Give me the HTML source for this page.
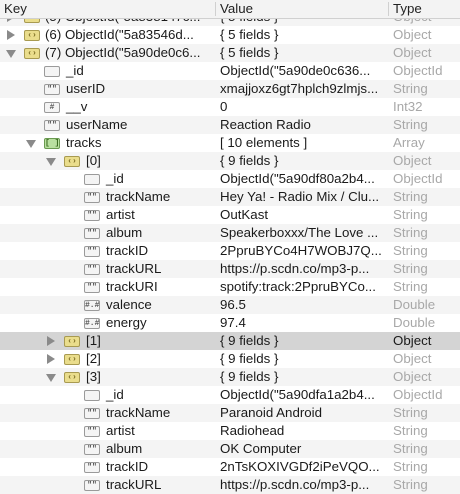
<!DOCTYPE html><html><head><style>
body{margin:0;width:460px;height:494px;overflow:hidden;background:#fff;font-family:"Liberation Sans",Arial,sans-serif;font-size:13.3px;color:#1a1a1a;position:relative}
#rows{position:absolute;top:8px;left:0;width:460px}
.r{height:18px;position:relative;line-height:18px;white-space:nowrap}
.r:nth-child(odd){background:#f4f4f4}
.r.sel{background:#d4d4d4}
.k,.v,.t{position:absolute;top:0}
.v{left:220px}
.t{left:393px;color:#a8a8a8}
.sel .t{color:#1a1a1a}
.ar{position:absolute;top:6px;width:0;height:0}
.ar.d{border-left:5px solid transparent;border-right:5px solid transparent;border-top:8px solid #8a8a8a}
.ar.rt{border-top:5px solid transparent;border-bottom:5px solid transparent;border-left:8px solid #8a8a8a;top:4px}
.ic{position:absolute;top:4px;width:14px;height:9px;border:1px solid #9a9a9a;border-radius:2px;background:#f4f4f4;font-size:8px;line-height:9px;text-align:center;color:#555;font-family:"Liberation Mono",monospace;font-weight:bold}
.ic.o{background:#eadd8c;border-color:#a89a50;color:#7a6a20}
.ic.a{background:#b9e0a0;border-color:#6a9a50;color:#3a6a20}
#hd{position:absolute;top:0;left:0;width:460px;height:18px;background:#f3f3f3;border-bottom:1px solid #d0d0d0;line-height:18px;font-size:13.3px;color:#222}
#hd span{position:absolute;top:0}
.dv{position:absolute;top:2px;width:1px;height:14px;background:#d0d0d0}
</style></head><body>
<div id="rows">
<div class="r"><span class="ar rt" style="left:7px"></span><span class="ic o" style="left:24px">‹›</span><span class="k" style="left:45px">(5) ObjectId("5a838147c...</span><span class="v">{ 5 fields }</span><span class="t">Object</span></div>
<div class="r"><span class="ar rt" style="left:7px"></span><span class="ic o" style="left:24px">‹›</span><span class="k" style="left:45px">(6) ObjectId("5a83546d...</span><span class="v">{ 5 fields }</span><span class="t">Object</span></div>
<div class="r"><span class="ar d" style="left:6px"></span><span class="ic o" style="left:24px">‹›</span><span class="k" style="left:45px">(7) ObjectId("5a90de0c6...</span><span class="v">{ 5 fields }</span><span class="t">Object</span></div>
<div class="r"><span class="ic" style="left:44px"></span><span class="k" style="left:66px">_id</span><span class="v">ObjectId("5a90de0c636...</span><span class="t">ObjectId</span></div>
<div class="r"><span class="ic" style="left:44px">""</span><span class="k" style="left:66px">userID</span><span class="v">xmajjoxz6gt7hplch9zlmjs...</span><span class="t">String</span></div>
<div class="r"><span class="ic" style="left:44px">#</span><span class="k" style="left:66px">__v</span><span class="v">0</span><span class="t">Int32</span></div>
<div class="r"><span class="ic" style="left:44px">""</span><span class="k" style="left:66px">userName</span><span class="v">Reaction Radio</span><span class="t">String</span></div>
<div class="r"><span class="ar d" style="left:26px"></span><span class="ic a" style="left:44px">[ ]</span><span class="k" style="left:66px">tracks</span><span class="v">[ 10 elements ]</span><span class="t">Array</span></div>
<div class="r"><span class="ar d" style="left:46px"></span><span class="ic o" style="left:64px">‹›</span><span class="k" style="left:86px">[0]</span><span class="v">{ 9 fields }</span><span class="t">Object</span></div>
<div class="r"><span class="ic" style="left:84px"></span><span class="k" style="left:106px">_id</span><span class="v">ObjectId("5a90df80a2b4...</span><span class="t">ObjectId</span></div>
<div class="r"><span class="ic" style="left:84px">""</span><span class="k" style="left:106px">trackName</span><span class="v">Hey Ya! - Radio Mix / Clu...</span><span class="t">String</span></div>
<div class="r"><span class="ic" style="left:84px">""</span><span class="k" style="left:106px">artist</span><span class="v">OutKast</span><span class="t">String</span></div>
<div class="r"><span class="ic" style="left:84px">""</span><span class="k" style="left:106px">album</span><span class="v">Speakerboxxx/The Love ...</span><span class="t">String</span></div>
<div class="r"><span class="ic" style="left:84px">""</span><span class="k" style="left:106px">trackID</span><span class="v">2PpruBYCo4H7WOBJ7Q...</span><span class="t">String</span></div>
<div class="r"><span class="ic" style="left:84px">""</span><span class="k" style="left:106px">trackURL</span><span class="v">https://p.scdn.co/mp3-p...</span><span class="t">String</span></div>
<div class="r"><span class="ic" style="left:84px">""</span><span class="k" style="left:106px">trackURI</span><span class="v">spotify:track:2PpruBYCo...</span><span class="t">String</span></div>
<div class="r"><span class="ic" style="left:84px">#.#</span><span class="k" style="left:106px">valence</span><span class="v">96.5</span><span class="t">Double</span></div>
<div class="r"><span class="ic" style="left:84px">#.#</span><span class="k" style="left:106px">energy</span><span class="v">97.4</span><span class="t">Double</span></div>
<div class="r sel"><span class="ar rt" style="left:47px"></span><span class="ic o" style="left:64px">‹›</span><span class="k" style="left:86px">[1]</span><span class="v">{ 9 fields }</span><span class="t">Object</span></div>
<div class="r"><span class="ar rt" style="left:47px"></span><span class="ic o" style="left:64px">‹›</span><span class="k" style="left:86px">[2]</span><span class="v">{ 9 fields }</span><span class="t">Object</span></div>
<div class="r"><span class="ar d" style="left:46px"></span><span class="ic o" style="left:64px">‹›</span><span class="k" style="left:86px">[3]</span><span class="v">{ 9 fields }</span><span class="t">Object</span></div>
<div class="r"><span class="ic" style="left:84px"></span><span class="k" style="left:106px">_id</span><span class="v">ObjectId("5a90dfa1a2b4...</span><span class="t">ObjectId</span></div>
<div class="r"><span class="ic" style="left:84px">""</span><span class="k" style="left:106px">trackName</span><span class="v">Paranoid Android</span><span class="t">String</span></div>
<div class="r"><span class="ic" style="left:84px">""</span><span class="k" style="left:106px">artist</span><span class="v">Radiohead</span><span class="t">String</span></div>
<div class="r"><span class="ic" style="left:84px">""</span><span class="k" style="left:106px">album</span><span class="v">OK Computer</span><span class="t">String</span></div>
<div class="r"><span class="ic" style="left:84px">""</span><span class="k" style="left:106px">trackID</span><span class="v">2nTsKOXIVGDf2iPeVQO...</span><span class="t">String</span></div>
<div class="r"><span class="ic" style="left:84px">""</span><span class="k" style="left:106px">trackURL</span><span class="v">https://p.scdn.co/mp3-p...</span><span class="t">String</span></div>
</div>
<div id="hd"><span style="left:4px">Key</span><div class="dv" style="left:215px"></div><span style="left:220px">Value</span><div class="dv" style="left:388px"></div><span style="left:393px">Type</span></div>
</body></html>
